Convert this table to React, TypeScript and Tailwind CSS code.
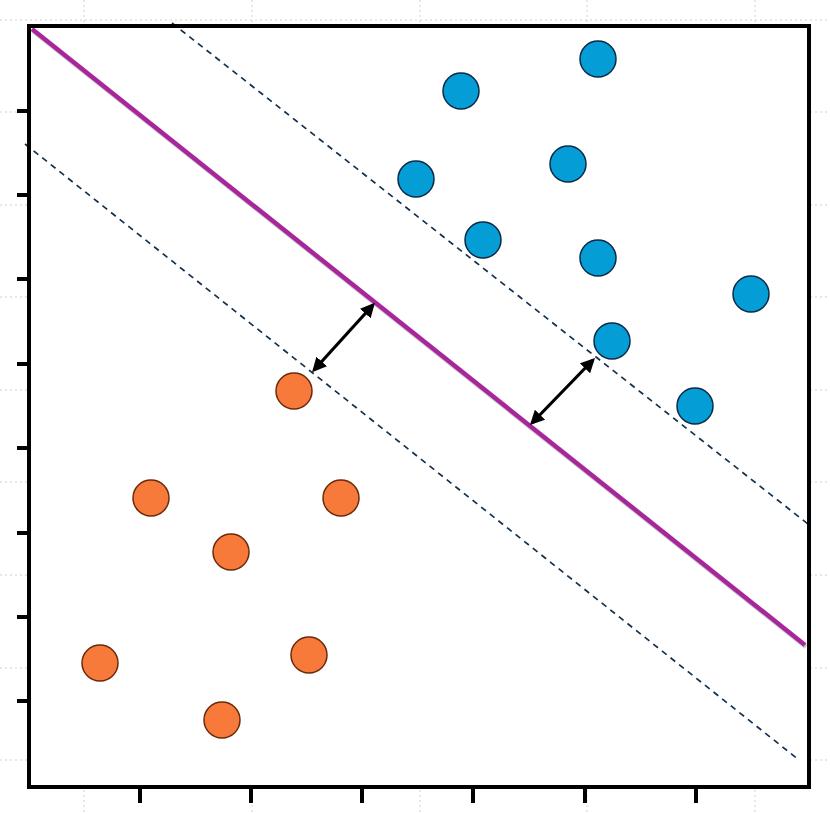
import React from 'react'

const blue: [number, number][] = [
  [598, 59], [461, 91], [568, 164], [416, 179], [483, 240],
  [598, 258], [751, 294], [612, 341], [695, 406],
]

const orange: [number, number][] = [
  [294, 391], [151, 498], [341, 498], [231, 552],
  [100, 663], [309, 655], [222, 720],
]

const yTicks = [111, 195, 279, 364, 448, 533, 617, 701]
const xTicks = [140, 251, 362, 473, 585, 696]
const gridY = [20, 112, 205, 297, 390, 482, 575, 668, 760]
const gridX = [84, 252, 420, 587, 755]

export default function App() {
  return (
    <div className="w-[830px] h-[814px] bg-white overflow-hidden">
      <svg width="830" height="814" viewBox="0 0 830 814">
        <defs>
          <marker id="head" viewBox="0 0 10 10" refX="8" refY="5" markerWidth="4.5" markerHeight="4.5" orient="auto-start-reverse">
            <path d="M0 0 L10 5 L0 10 z" fill="#000" />
          </marker>
        </defs>

        {/* background slide grid */}
        {gridY.map(y => (
          <line key={'gy' + y} x1="0" x2="830" y1={y} y2={y} stroke="#e0e0e0" strokeWidth="1.5" strokeDasharray="2 3" />
        ))}
        {gridX.map(x => (
          <line key={'gx' + x} x1={x} x2={x} y1="0" y2="814" stroke="#e0e0e0" strokeWidth="1.5" strokeDasharray="2 3" />
        ))}

        {/* plot area */}
        <rect x="29" y="26" width="780" height="761" fill="#fff" />

        {/* margins */}
        <line x1="172" y1="23" x2="808" y2="524" stroke="#14304f" strokeWidth="1.7" strokeDasharray="6 5" />
        <line x1="25" y1="144" x2="799" y2="760" stroke="#14304f" strokeWidth="1.7" strokeDasharray="6 5" />

        {/* hyperplane */}
        <line x1="33" y1="31" x2="806" y2="647" stroke="#999" strokeWidth="4.5" opacity="0.5" />
        <line x1="32" y1="29" x2="805" y2="645" stroke="#a8269b" strokeWidth="4.5" />

        {/* arrows */}
        <line x1="373" y1="305" x2="314" y2="370" stroke="#000" strokeWidth="3.2" markerStart="url(#head)" markerEnd="url(#head)" />
        <line x1="532" y1="423" x2="593" y2="360" stroke="#000" strokeWidth="3.2" markerStart="url(#head)" markerEnd="url(#head)" />

        {blue.map(([x, y]) => (
          <circle key={'b' + x + y} cx={x} cy={y} r="18" fill="#049dd6" stroke="#0b2a45" strokeWidth="1.5" />
        ))}
        {orange.map(([x, y]) => (
          <circle key={'o' + x + y} cx={x} cy={y} r="18" fill="#f77a3a" stroke="#6a2a0c" strokeWidth="1.5" />
        ))}

        {/* axes box */}
        <rect x="29" y="26" width="780" height="761" fill="none" stroke="#000" strokeWidth="4" />
        {yTicks.map(y => (
          <line key={'yt' + y} x1="17" x2="29" y1={y} y2={y} stroke="#000" strokeWidth="4" />
        ))}
        {xTicks.map(x => (
          <line key={'xt' + x} x1={x} x2={x} y1="787" y2="803" stroke="#000" strokeWidth="4" />
        ))}
      </svg>
    </div>
  )
}
